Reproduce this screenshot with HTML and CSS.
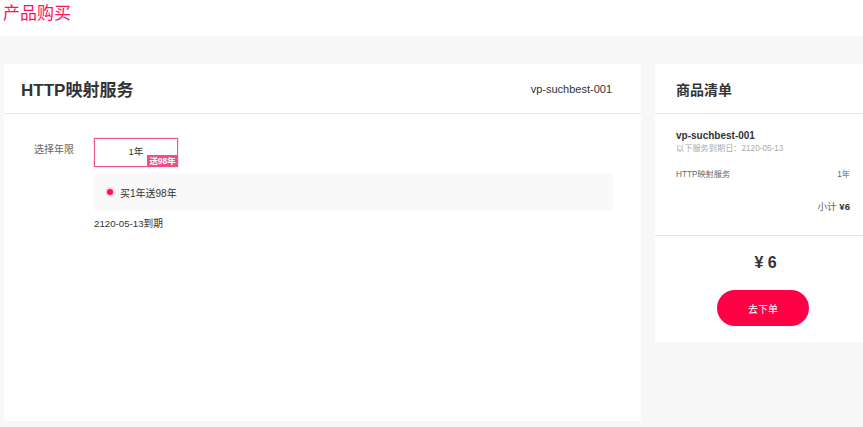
FILE: index.html
```html
<!DOCTYPE html>
<html lang="zh">
<head>
<meta charset="utf-8">
<title>产品购买</title>
<link rel="stylesheet" href="styles.css">
</head>
<body>
<header class="topbar">
  <h1 class="page-title">产品购买</h1>
</header>
<main class="content">
  <section class="card main-card">
    <div class="card-head">
      <h2 class="service-title">HTTP映射服务</h2>
      <span class="service-id">vp-suchbest-001</span>
    </div>
    <div class="main-body">
      <div class="form-row">
        <div class="form-label">选择年限</div>
        <div class="form-field">
          <div class="year-option">
            <span class="year-text">1年</span>
            <span class="year-badge">送98年</span>
          </div>
          <div class="promo-box">
            <span class="radio"><span class="radio-dot"></span></span>
            <span class="promo-text">买1年送98年</span>
          </div>
          <div class="expire">2120-05-13到期</div>
        </div>
      </div>
    </div>
  </section>
  <aside class="card side-card">
    <div class="card-head side-head">
      <h2 class="side-title">商品清单</h2>
    </div>
    <div class="side-body">
      <div class="item-id">vp-suchbest-001</div>
      <div class="item-date">以下服务到期日：2120-05-13</div>
      <div class="item-row">
        <span>HTTP映射服务</span>
        <span>1年</span>
      </div>
      <div class="subtotal">小计 <b>¥6</b></div>
    </div>
    <div class="side-foot">
      <div class="total">¥ 6</div>
      <button class="order-btn">去下单</button>
    </div>
  </aside>
</main>
</body>
</html>
```

FILE: styles.css
```css
html, body {
  margin: 0;
  padding: 0;
  overflow: hidden;
}
body {
  background: #f7f7f7;
  font-family: "Liberation Sans", "Noto Sans CJK SC", sans-serif;
  color: #333;
  width: 863px;
  height: 427px;
}
.topbar {
  background: #fff;
  height: 36px;
  padding-left: 3px;
}
.page-title {
  margin: 0;
  font-size: 17px;
  font-weight: normal;
  color: #ff1060;
  line-height: 28px;
}
.content {
  display: flex;
  align-items: flex-start;
  gap: 14px;
  padding: 28px 0 0 4px;
  width: 871px;
}
.card {
  background: #fff;
  flex: none;
}
.main-card {
  width: 637px;
  height: 357px;
}
.card-head {
  height: 49px;
  border-bottom: 1px solid #e6e6e6;
  display: flex;
  align-items: center;
  justify-content: space-between;
  padding: 0 29px 0 17px;
}
.service-title {
  margin: 0;
  font-size: 17px;
  font-weight: bold;
  color: #333;
  padding-bottom: 1px;
}
.service-id {
  font-size: 11px;
  color: #333;
}
.main-body {
  padding: 24px 28px 0 30px;
}
.form-row {
  display: flex;
}
.form-label {
  width: 60px;
  font-size: 10px;
  color: #666;
  line-height: 12px;
  padding-top: 6px;
}
.form-field {
  flex: 1;
}
.year-option {
  position: relative;
  width: 82px;
  height: 27px;
  border: 1px solid #f0508a;
  box-shadow: 0 0 0 1px #fde6ee;
  display: flex;
  justify-content: center;
  align-items: center;
  box-sizing: content-box;
}
.year-text {
  font-size: 9.6px;
  color: #333;
  padding-bottom: 3px;
}
.year-badge {
  position: absolute;
  right: -1px;
  bottom: -1px;
  width: 31px;
  height: 12px;
  background: #f24d84;
  color: #fff;
  font-size: 8.4px;
  font-weight: bold;
  line-height: 12px;
  text-align: center;
}
.promo-box {
  margin-top: 7px;
  height: 36px;
  background: #f9f9f9;
  display: flex;
  align-items: center;
  padding-left: 11px;
  gap: 5px;
}
.radio {
  width: 10px;
  height: 10px;
  border-radius: 50%;
  background: #fcd3e0;
  display: flex;
  align-items: center;
  justify-content: center;
}
.radio-dot {
  width: 6px;
  height: 6px;
  border-radius: 50%;
  background: #ff0d55;
}
.promo-text {
  font-size: 10px;
  color: #333;
}
.expire {
  margin-top: 8px;
  font-size: 9.7px;
  line-height: 12px;
  color: #333;
}
.side-card {
  width: 216px;
}
.side-head {
  padding: 0 21px;
}
.side-title {
  margin: 0;
  font-size: 14px;
  font-weight: bold;
  color: #333;
}
.side-body {
  padding: 15px 21px 21px;
  border-bottom: 1px solid #e6e6e6;
}
.item-id {
  font-size: 10px;
  font-weight: bold;
  line-height: 14px;
  color: #333;
}
.item-date {
  font-size: 8.2px;
  line-height: 12px;
  color: #aaa;
}
.item-row {
  margin-top: 14px;
  display: flex;
  justify-content: space-between;
  font-size: 8.2px;
  line-height: 12px;
  color: #666;
}
.subtotal {
  margin-top: 19px;
  text-align: right;
  font-size: 9.6px;
  line-height: 14px;
  color: #666;
}
.subtotal b {
  color: #333;
}
.side-foot {
  padding: 16px 0;
  display: flex;
  flex-direction: column;
  align-items: center;
}
.total {
  font-size: 16px;
  font-weight: bold;
  line-height: 22px;
  color: #333;
  padding-left: 5px;
}
.order-btn {
  margin-top: 16px;
  width: 92px;
  height: 36px;
  border: none;
  border-radius: 18px;
  background: #ff0046;
  color: #fff;
  font-family: "Liberation Sans", "Noto Sans CJK SC", sans-serif;
  font-size: 10px;
  padding: 0;
}
```
